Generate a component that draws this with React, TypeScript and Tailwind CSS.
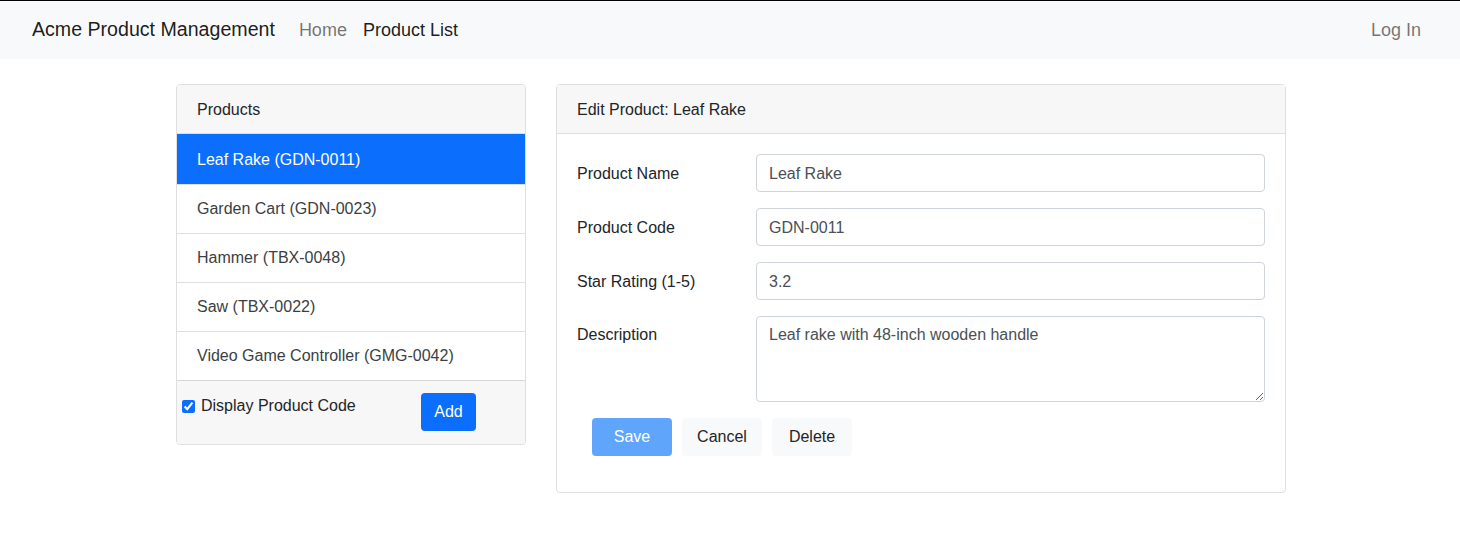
import React from "react";

const products = [
  { name: "Leaf Rake", code: "GDN-0011" },
  { name: "Garden Cart", code: "GDN-0023" },
  { name: "Hammer", code: "TBX-0048" },
  { name: "Saw", code: "TBX-0022" },
  { name: "Video Game Controller", code: "GMG-0042" },
];

function Field({ label, value }: { label: string; value: string }) {
  return (
    <div className="flex items-start">
      <label className="w-[179px] shrink-0 pt-[8px] leading-6 text-[#212529]">{label}</label>
      <input
        readOnly
        value={value}
        className="h-[38px] flex-1 rounded-[4px] border border-[#ced4da] bg-white px-3 pt-[1px] text-[16px] text-[#495057] outline-none"
      />
    </div>
  );
}

export default function App() {
  return (
    <div className="min-h-[548px] bg-white text-[16px] text-[#212529]" style={{ fontFamily: '"Liberation Sans", Arial, sans-serif' }}>
      <nav className="flex h-[59px] items-center border-t border-black bg-[#f8f9fa] px-8">
        <span className="mr-6 text-[19.6px] text-black/90">Acme Product Management</span>
        <a className="mr-4 text-[18px] text-black/55">Home</a>
        <a className="text-[18px] text-black/90">Product List</a>
        <a className="ml-auto mr-[7px] text-[18px] text-black/55">Log In</a>
      </nav>

      <main className="mx-auto mt-[25px] flex w-[1112px] items-start gap-[30px] pl-[2px]">
        <div className="w-[350px] overflow-hidden rounded-[4px] border border-[#dfdfdf]">
          <div className="h-[49px] border-b border-[#dfdfdf] bg-[#f7f7f7] px-5 pt-[13px] leading-6">Products</div>
          <ul className="border-b border-[#d6d6d6]">
            {products.map((p, i) => (
              <li
                key={p.code}
                className={
                  i === 0
                    ? "h-[50px] bg-[#0b6efd] px-5 pt-[14px] leading-6 text-white"
                    : "h-[49px] border-t border-[#dfdfdf] px-5 py-3 leading-6 text-[#3a3f44] first-of-type:border-t-0"
                }
              >
                {p.name} ({p.code})
              </li>
            ))}
          </ul>
          <div className="flex h-[63px] items-start bg-[#f7f7f7] pt-[13px]">
            <label className="ml-[5px] flex items-center gap-[6px] leading-6">
              <input type="checkbox" defaultChecked className="h-[13px] w-[13px] accent-[#0b6efd]" />
              Display Product Code
            </label>
            <button className="ml-auto mr-[49px] -mt-px h-[38px] w-[55px] rounded-[4px] bg-[#0b6efd] text-white">Add</button>
          </div>
        </div>

        <div className="w-[730px] rounded-[4px] border border-[#dfdfdf]">
          <div className="h-[49px] border-b border-[#dfdfdf] bg-[#f7f7f7] px-5 pt-[13px] leading-6">Edit Product: Leaf Rake</div>
          <div className="flex flex-col gap-4 p-5">
            <Field label="Product Name" value="Leaf Rake" />
            <Field label="Product Code" value="GDN-0011" />
            <Field label="Star Rating (1-5)" value="3.2" />
            <div className="flex items-start">
              <label className="w-[179px] shrink-0 pt-[7px] leading-6">Description</label>
              <textarea
                readOnly
                value="Leaf rake with 48-inch wooden handle"
                className="h-[86px] flex-1 resize-y rounded-[4px] border border-[#ced4da] bg-white px-3 py-[6px] text-[16px] leading-6 text-[#495057] outline-none"
              />
            </div>
            <div className="flex gap-[10px] pb-4 pl-[15px]">
              <button disabled className="h-[38px] w-[80px] rounded-[4px] bg-[#5fa5fc] text-[16px] text-white">Save</button>
              <button className="h-[38px] w-[80px] rounded-[4px] bg-[#f8f9fa] text-[16px] text-[#212529]">Cancel</button>
              <button className="h-[38px] w-[80px] rounded-[4px] bg-[#f8f9fa] text-[16px] text-[#212529]">Delete</button>
            </div>
          </div>
        </div>
      </main>
    </div>
  );
}
